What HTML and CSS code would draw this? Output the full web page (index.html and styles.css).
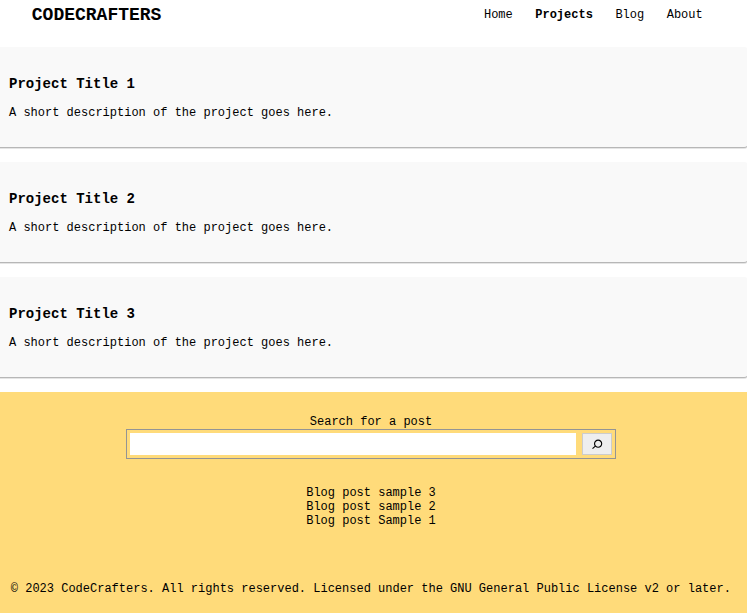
FILE: index.html
```html
<!DOCTYPE html>
<html lang="en">
<head>
<meta charset="utf-8">
<title>CodeCrafters</title>
<link rel="stylesheet" href="styles.css">
</head>
<body>
<header class="header">
  <div class="logo">CODECRAFTERS</div>
  <nav class="nav"><a>Home</a><a class="active">Projects</a><a>Blog</a><a>About</a></nav>
</header>
<main>
  <article class="project"><h3>Project Title 1</h3><p>A short description of the project goes here.</p></article>
  <article class="project"><h3>Project Title 2</h3><p>A short description of the project goes here.</p></article>
  <article class="project"><h3>Project Title 3</h3><p>A short description of the project goes here.</p></article>
</main>
<footer class="footer">
  <form class="search">
    <label for="q">Search for a post</label>
    <div class="search-box">
      <input id="q" type="text">
      <button type="button" aria-label="Search"><svg viewBox="0 0 24 24" width="18" height="18"><path d="M13.5 6C10.500 6 8 8.500 8 11.500c0 1.100.300 2.100.900 3l-3.400 3 1 1.100 3.400-2.900c1 .900 2.200 1.400 3.600 1.400 3 0 5.500-2.500 5.500-5.500C19 8.500 16.500 6 13.500 6zm0 9.500c-2.200 0-4-1.800-4-4s1.800-4 4-4 4 1.800 4 4-1.800 4-4 4z"/></svg></button>
    </div>
  </form>
  <ul class="posts"><li>Blog post sample 3</li><li>Blog post sample 2</li><li>Blog post Sample 1</li></ul>
  <p class="copyright">© 2023 CodeCrafters. All rights reserved. Licensed under the GNU General Public License v2 or later.</p>
</footer>
</body>
</html>
```

FILE: styles.css
```css
* { box-sizing: border-box; margin: 0; padding: 0; }
body { font: 12px/14px "Liberation Mono", monospace; color: #000; background: #fff; overflow: hidden; }
.header { display: flex; justify-content: space-between; height: 47px; padding: 5px 44.3px 0 31.8px; }
.logo { font-size: 18px; line-height: 20px; font-weight: bold; }
.nav { display: flex; gap: 22.5px; padding-top: 3px; }
.active { font-weight: bold; }
.project { height: 100px; margin: 0 -1px 15px -6px; padding: 29px 15px 0; background: #f9f9f9; border-radius: 4px; box-shadow: 0 1px 0 rgba(0,0,0,.2), 0 2px 0 rgba(0,0,0,.1); }
.project h3 { font-size: 14px; line-height: 16px; margin-bottom: 14px; }
.footer { height: 221px; background: #ffdb7a; padding-top: 23px; }
.search { width: 490px; margin-left: 126px; }
.search label { display: block; text-align: center; }
.search-box { display: flex; gap: 6px; height: 30px; margin-top: 0; padding: 3px; border: 1px solid #949494; }
.search-box input { flex: 1; min-width: 0; border: 0; background: #fff; }
.search-box button { display: flex; align-items: center; justify-content: center; width: 30px; border: 1px solid #ccc; background: #eee; }
.posts { list-style: none; text-align: center; width: 490px; margin: 27px 0 0 126px; }
.copyright { margin: 54px 0 0 10.8px; white-space: nowrap; }
```
